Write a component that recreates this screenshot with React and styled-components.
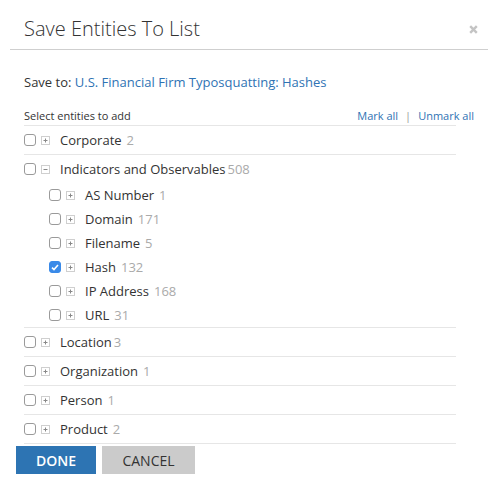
import styled, { createGlobalStyle } from 'styled-components';

const GlobalStyle = createGlobalStyle`
  html, body {
    margin: 0;
    padding: 0;
    background: #fff;
  }
  body {
    font-family: 'Open Sans', 'Liberation Sans', sans-serif;
    color: #333;
  }
`;

const Modal = styled.div`
  width: 498px;
  height: 498px;
  background: #fff;
`;

const Header = styled.div`
  margin: 0 10px;
  padding: 15px 10px 6px 14px;
  border-bottom: 1px solid #cfcfcf;
  display: flex;
  align-items: center;
  justify-content: space-between;
`;

const Title = styled.h1`
  margin: 0;
  font-size: 20px;
  line-height: 28px;
  font-weight: 300;
  color: #333;
`;

const Close = styled.button`
  border: 0;
  padding: 0;
  background: none;
  display: flex;
  cursor: pointer;
`;

const Body = styled.div`
  padding: 0 24px;
`;

const SaveTo = styled.div`
  margin-top: 23px;
  font-size: 13px;
  line-height: 18px;
  color: #333;
`;

const Link = styled.a`
  color: #2f73b4;
  text-decoration: none;
  cursor: pointer;
`;

const ListHead = styled.div`
  margin-top: 17px;
  display: flex;
  justify-content: space-between;
  font-size: 11px;
  line-height: 16px;
  padding-bottom: 1px;
`;

const Sep = styled.span`
  color: #999;
  margin: 0 7px;
`;

const List = styled.div`
  margin-right: 18px;
  border-top: 1px solid #e6e6e6;
`;

const Group = styled.div`
  border-bottom: 1px solid #e6e6e6;
`;

const Row = styled.div`
  display: flex;
  align-items: center;
  height: ${(p) => (p.$child ? 24 : 28)}px;
  padding-left: ${(p) => (p.$child ? 25 : 0)}px;
`;

const Check = styled.span`
  box-sizing: border-box;
  width: 12px;
  height: 12px;
  border-radius: 3px;
  border: 1px solid ${(p) => (p.$on ? '#3a8ae8' : '#9a9a9a')};
  background: ${(p) => (p.$on ? '#3a8ae8' : '#fff')};
  display: flex;
  align-items: center;
  justify-content: center;
  flex: none;
`;

const Toggle = styled.span`
  box-sizing: border-box;
  width: 9px;
  height: 9px;
  margin-left: 5px;
  border: 1px solid #cfcfcf;
  display: flex;
  flex: none;
`;

const Label = styled.span`
  margin-left: 10px;
  font-size: 13px;
  color: #333;
  white-space: nowrap;
`;

const Count = styled.span`
  color: #aaa;
  margin-left: ${(p) => (p.$tight ? 2 : 5)}px;
`;

const Footer = styled.div`
  margin-top: 2px;
  padding-left: 16px;
  display: flex;
  gap: 6px;
`;

const Button = styled.button`
  height: 28px;
  border: 0;
  padding: 0;
  width: ${(p) => (p.$primary ? 80 : 93)}px;
  background: ${(p) => (p.$primary ? '#2d74b3' : '#cbcbcb')};
  color: ${(p) => (p.$primary ? '#fff' : '#333')};
  font-family: 'Open Sans', 'Liberation Sans', sans-serif;
  font-size: 14px;
  font-weight: ${(p) => (p.$primary ? 600 : 400)};
  text-transform: uppercase;
  cursor: pointer;
`;

function Box({ checked }) {
  return (
    <Check $on={checked}>
      {checked && (
        <svg width="8" height="7" viewBox="0 0 8 7">
          <path d="M1 3.6 L3 5.6 L7 1" fill="none" stroke="#fff" strokeWidth="1.6" />
        </svg>
      )}
    </Check>
  );
}

function Expander({ open }) {
  return (
    <Toggle>
      <svg width="7" height="7" viewBox="0 0 7 7">
        <path d="M1.5 3.5 H5.5" stroke="#888" strokeWidth="1" />
        {!open && <path d="M3.5 1.5 V5.5" stroke="#888" strokeWidth="1" />}
      </svg>
    </Toggle>
  );
}

function Entity({ name, count, child, open, checked, tight }) {
  return (
    <Row $child={child}>
      <Box checked={checked} />
      <Expander open={open} />
      <Label>
        {name}
        <Count $tight={tight}>{count}</Count>
      </Label>
    </Row>
  );
}

const indicators = [
  ['AS Number', 1],
  ['Domain', 171],
  ['Filename', 5],
  ['Hash', 132, true],
  ['IP Address', 168],
  ['URL', 31],
];

const rest = [
  ['Location', 3, true],
  ['Organization', 1],
  ['Person', 1],
  ['Product', 2],
];

export default function App() {
  return (
    <Modal>
      <GlobalStyle />
      <Header>
        <Title>Save Entities To List</Title>
        <Close aria-label="close">
          <svg width="9" height="9" viewBox="0 0 9 9">
            <path d="M1.2 1.2 L7.8 7.8 M7.8 1.2 L1.2 7.8" stroke="#c4c4c4" strokeWidth="2.4" />
          </svg>
        </Close>
      </Header>
      <Body>
        <SaveTo>
          Save to: <Link>U.S. Financial Firm Typosquatting: Hashes</Link>
        </SaveTo>
        <ListHead>
          <span>Select entities to add</span>
          <span>
            <Link>Mark all</Link>
            <Sep>|</Sep>
            <Link>Unmark all</Link>
          </span>
        </ListHead>
        <List>
          <Group>
            <Entity name="Corporate" count={2} />
          </Group>
          <Group>
            <Entity name="Indicators and Observables" count={508} open tight />
            {indicators.map(([n, c, on]) => (
              <Entity key={n} name={n} count={c} checked={on} child />
            ))}
          </Group>
          {rest.map(([n, c, tight]) => (
            <Group key={n}>
              <Entity name={n} count={c} tight={tight} />
            </Group>
          ))}
        </List>
      </Body>
      <Footer>
        <Button $primary>Done</Button>
        <Button>Cancel</Button>
      </Footer>
    </Modal>
  );
}
